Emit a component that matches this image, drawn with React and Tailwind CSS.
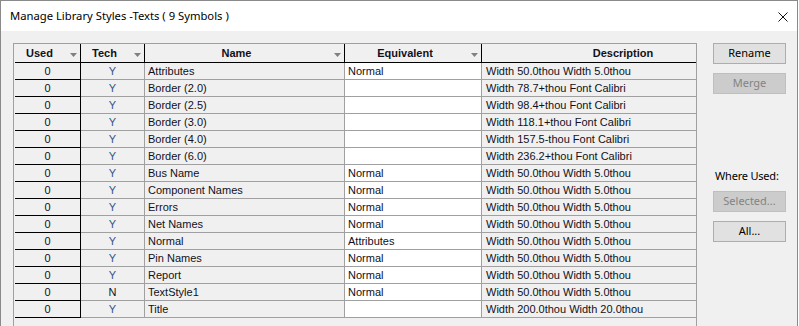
import React from "react";

const W50 = "Width 50.0thou Width 5.0thou";

const rows = [
  ["Y", "Attributes", "Normal", W50],
  ["Y", "Border (2.0)", "", "Width 78.7+thou Font Calibri"],
  ["Y", "Border (2.5)", "", "Width 98.4+thou Font Calibri"],
  ["Y", "Border (3.0)", "", "Width 118.1+thou Font Calibri"],
  ["Y", "Border (4.0)", "", "Width 157.5-thou Font Calibri"],
  ["Y", "Border (6.0)", "", "Width 236.2+thou Font Calibri"],
  ["Y", "Bus Name", "Normal", W50],
  ["Y", "Component Names", "Normal", W50],
  ["Y", "Errors", "Normal", W50],
  ["Y", "Net Names", "Normal", W50],
  ["Y", "Normal", "Attributes", W50],
  ["Y", "Pin Names", "Normal", W50],
  ["Y", "Report", "Normal", W50],
  ["N", "TextStyle1", "Normal", W50],
  ["Y", "Title", "", "Width 200.0thou Width 20.0thou"],
];

function SortArrow() {
  return (
    <svg width="7" height="4" viewBox="0 0 7 4" className="absolute right-[3px] top-[9px]">
      <polygon points="0,0 7,0 3.5,4" fill="#808080" />
    </svg>
  );
}

function HeadCell({ w, label, arrow = true, last = false }) {
  return (
    <div
      className={`relative h-full flex items-center justify-center ${w} ${last ? "" : "border-r border-black"} ${arrow ? "pr-[16px]" : ""}`}
    >
      <span className="font-bold">{label}</span>
      {arrow && <SortArrow />}
    </div>
  );
}

function WinButton({ children, disabled }) {
  return (
    <div
      className={`w-[73px] h-[21px] flex items-center justify-center border text-[11px] ${
        disabled
          ? "bg-[#cccccc] border-[#bfbfbf] text-[#838383]"
          : "bg-[#e1e1e1] border-[#adadad] text-black"
      }`}
      style={{ fontFamily: '"Noto Sans", sans-serif' }}
    >
      {children}
    </div>
  );
}

export default function App() {
  return (
    <div className="w-[799px] h-[326px] overflow-hidden bg-white">
      <div className="w-[798px] h-[326px] border-l border-t border-r border-[#8a8a8a] flex flex-col">
        {/* title bar */}
        <div className="h-[30px] bg-white flex items-center pl-[9px] pr-[9px]">
          <span className="text-[11.25px] text-black" style={{ fontFamily: '"Noto Sans", sans-serif' }}>
            Manage Library Styles -Texts ( 9 Symbols )
          </span>
          <svg width="10" height="10" viewBox="0 0 10 10" className="ml-auto mt-[1px]">
            <path d="M0.5 0.5 L9.5 9.5 M9.5 0.5 L0.5 9.5" stroke="#111" strokeWidth="1" />
          </svg>
        </div>

        <div className="flex-1 bg-[#f0f0f0] flex pl-[12px] pt-[12px]">
          {/* grid */}
          <div
            className="w-[684px] border-l border-t border-r border-[#a0a0a0] pl-[1px] overflow-hidden text-[11px] text-[#101020]"
            style={{ fontFamily: '"Liberation Sans", Arial, sans-serif' }}
          >
            <div className="w-[749px] flex h-[19px] border-b border-black">
              <HeadCell w="w-[66px]" label="Used" />
              <HeadCell w="w-[64px]" label="Tech" />
              <HeadCell w="w-[200px]" label="Name" />
              <HeadCell w="w-[137px]" label="Equivalent" />
              <HeadCell w="w-[282px]" label="Description" arrow={false} last />
            </div>
            {rows.map((r, i) => (
              <div key={i} className="w-[749px] flex h-[17px]">
                <div className="w-[66px] border-r border-b border-black flex items-center justify-center">0</div>
                <div className={`w-[64px] border-r border-b border-[#a0a0a0] flex items-center justify-center ${r[0] === "Y" ? "text-[#34558c]" : ""}`}>
                  {r[0]}
                </div>
                <div className="w-[200px] border-r border-b border-[#a0a0a0] flex items-center pl-[3px]">{r[1]}</div>
                <div className="w-[137px] bg-white border-r border-b border-[#a0a0a0] flex items-center pl-[3px]">{r[2]}</div>
                <div className="w-[282px] border-b border-[#a0a0a0] flex items-center pl-[4px]">{r[3]}</div>
              </div>
            ))}
          </div>

          {/* side buttons */}
          <div className="ml-[16px] flex flex-col">
            <WinButton>Rename</WinButton>
            <div className="mt-[9px]">
              <WinButton disabled>Merge</WinButton>
            </div>
            <div
              className="mt-[74px] h-[16px] pl-[2px] flex items-center text-[11px] tracking-[-0.2px] text-black"
              style={{ fontFamily: '"Noto Sans", sans-serif' }}
            >
              Where Used:
            </div>
            <div className="mt-[7px]">
              <WinButton disabled>Selected...</WinButton>
            </div>
            <div className="mt-[9px]">
              <WinButton>All...</WinButton>
            </div>
          </div>
        </div>
      </div>
    </div>
  );
}
